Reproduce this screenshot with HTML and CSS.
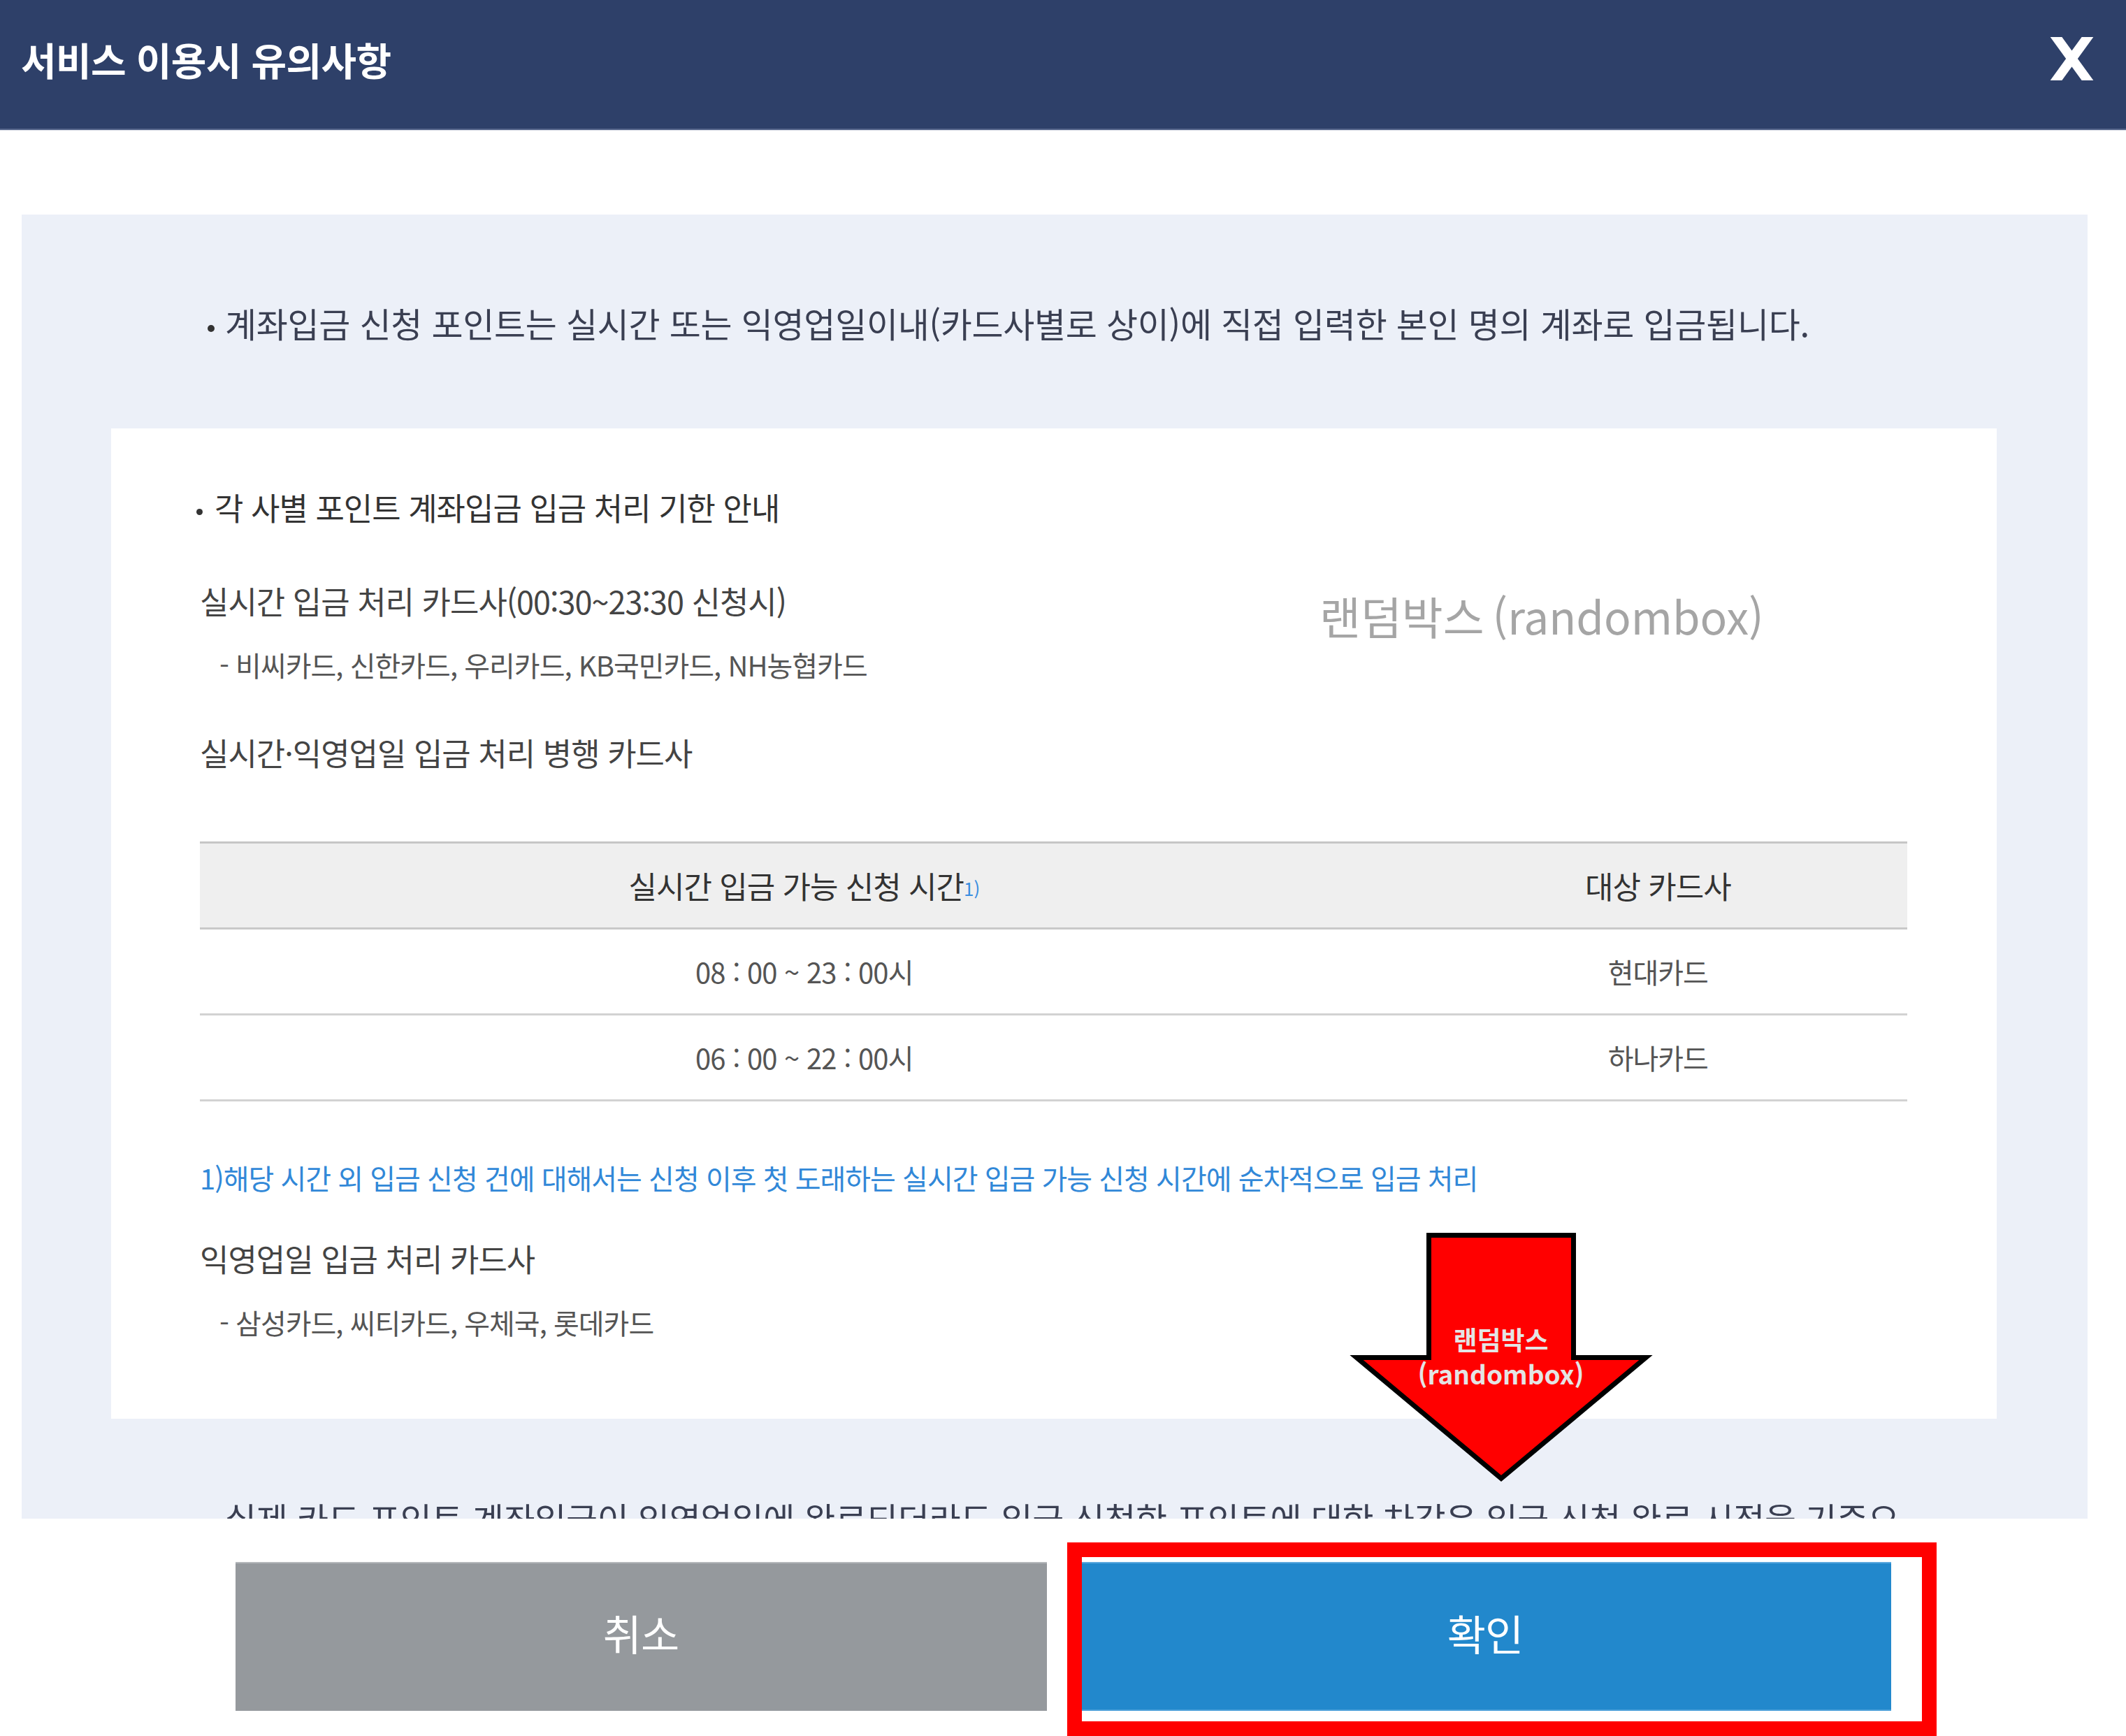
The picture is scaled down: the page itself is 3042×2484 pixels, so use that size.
FILE: index.html
```html
<!DOCTYPE html>
<html lang="ko">
<head>
<meta charset="utf-8">
<title>서비스 이용시 유의사항</title>
<link rel="stylesheet" href="styles.css">
</head>
<body>
<div class="modal">
  <header class="modal-header">
    <h1 class="modal-title">서비스 이용시 유의사항</h1>
    <button class="close" type="button" aria-label="닫기">
      <svg width="63" height="62" viewBox="0 0 63 62"><path d="M3.2 -8 L59.8 70 M59.8 -8 L3.2 70" stroke="#ffffff" stroke-width="13.5" fill="none"/></svg>
    </button>
  </header>

  <main class="modal-body">
    <div class="panel">
      <p class="note">계좌입금 신청 포인트는 실시간 또는 익영업일이내(카드사별로 상이)에 직접 입력한 본인 명의 계좌로 입금됩니다.</p>

      <section class="box">
        <h2 class="box-title">각 사별 포인트 계좌입금 입금 처리 기한 안내</h2>
        <p class="box-sub">실시간 입금 처리 카드사(00:30~23:30 신청시)</p>
        <p class="box-list">- 비씨카드, 신한카드, 우리카드, KB국민카드, NH농협카드</p>
        <p class="box-sub">실시간·익영업일 입금 처리 병행 카드사</p>
        <table class="deadline">
          <thead>
            <tr><th class="col-time">실시간 입금 가능 신청 시간<span class="fn">1)</span></th><th class="col-card">대상 카드사</th></tr>
          </thead>
          <tbody>
            <tr><td class="time">08 : 00 ~ 23 : 00시</td><td>현대카드</td></tr>
            <tr><td class="time">06 : 00 ~ 22 : 00시</td><td>하나카드</td></tr>
          </tbody>
        </table>
        <p class="box-foot">1)해당 시간 외 입금 신청 건에 대해서는 신청 이후 첫 도래하는 실시간 입금 가능 신청 시간에 순차적으로 입금 처리</p>
        <p class="box-sub">익영업일 입금 처리 카드사</p>
        <p class="box-list">- 삼성카드, 씨티카드, 우체국, 롯데카드</p>
        <div class="watermark">랜덤박스<span class="watermark-en">(randombox)</span></div>
      </section>

      <p class="note">실제 카드 포인트 계좌입금이 익영업일에 완료되더라도 입금 신청한 포인트에 대한 차감은 입금 신청 완료 시점을 기준으로 합니다.</p>
    </div>
  </main>

  <footer class="modal-foot">
    <button class="btn btn-cancel" type="button">취소</button>
    <button class="btn btn-ok" type="button">확인</button>
  </footer>

  <div class="callout-frame"></div>
  <div class="callout-arrow">
    <svg width="445" height="370" viewBox="0 0 445 370"><polygon points="119.5,9.5 326.5,9.5 326.5,184.5 430,184.5 223,357.5 16,184.5 119.5,184.5" fill="#ff0000" stroke="#000000" stroke-width="7" stroke-linejoin="miter" stroke-miterlimit="10"/></svg>
    <div class="callout-label">랜덤박스<br>(randombox)</div>
  </div>
</div>
</body>
</html>
```

FILE: styles.css
```css
html, body {
  margin: 0;
  padding: 0;
}

body {
  width: 3042px;
  height: 2484px;
  overflow: hidden;
  background: #ffffff;
  font-family: "Noto Sans CJK KR", "Noto Sans", "Liberation Sans", sans-serif;
  letter-spacing: -1px;
  color: #333333;
}

.modal {
  position: relative;
  width: 3042px;
  height: 2484px;
  display: flex;
  flex-direction: column;
}

/* header */
.modal-header {
  box-sizing: border-box;
  height: 184px;
  flex: 0 0 184px;
  background: #2e4069;
  display: flex;
  align-items: center;
  justify-content: space-between;
  padding: 0 46px 16px 30px;
  box-shadow: 0 2px 1px #55648a;
}

.modal-title {
  margin: 0;
  font-size: 55px;
  line-height: 70px;
  font-weight: 700;
  letter-spacing: -0.6px;
  color: #ffffff;
}

.close {
  border: 0;
  padding: 0;
  background: transparent;
  width: 63px;
  height: 62px;
  display: block;
}

.close svg {
  display: block;
}

/* body */
.modal-body {
  box-sizing: border-box;
  height: 1989px;
  flex: 0 0 1989px;
  overflow: hidden;
  padding: 123px 55px 0 31px;
}

.panel {
  background: #ecf0f8;
  padding: 119px 0 40px 0;
  min-height: 2000px;
}

.note {
  margin: 0;
  padding: 0 262px 0 266px;
  font-size: 49px;
  line-height: 72px;
  letter-spacing: -0.3px;
  color: #3a3f52;
}

.note::before {
  content: "";
  display: inline-block;
  width: 10px;
  height: 10px;
  border-radius: 50%;
  background: #333333;
  vertical-align: middle;
  margin-right: 15px;
}

.box + .note {
  margin-top: 106px;
}

.box {
  position: relative;
  margin: 115px 130px 0 128px;
  background: #ffffff;
  padding: 79px 128px 108px 127px;
}

.box-title {
  margin: 0 0 0 -5px;
  font-size: 45px;
  line-height: 68px;
  font-weight: 400;
  color: #333333;
}

.box-title::before {
  content: "";
  display: inline-block;
  width: 9px;
  height: 9px;
  border-radius: 50%;
  background: #333333;
  vertical-align: middle;
  margin-right: 17px;
}

.box-sub {
  margin: 0;
  font-size: 45px;
  line-height: 68px;
  color: #444444;
}

.box-list {
  margin: 0;
  padding-left: 28px;
  font-size: 40px;
  line-height: 60px;
  color: #555555;
}

.box-foot {
  margin: 0;
  font-size: 40px;
  line-height: 60px;
  color: #3188d8;
}

.box-title + .box-sub { margin-top: 66px; }
.box-sub + .box-list { margin-top: 27px; }
.box-list + .box-sub { margin-top: 62px; }
.box-sub + .deadline { margin-top: 93px; }
.deadline + .box-foot { margin-top: 79px; }
.box-foot + .box-sub { margin-top: 52px; }

/* table */
.deadline {
  width: 100%;
  border-collapse: separate;
  border-spacing: 0;
}

.deadline th,
.deadline td {
  padding: 0;
  height: 120px;
  text-align: center;
  vertical-align: middle;
  border-bottom: 3px solid #d2d2d2;
}

.deadline th {
  background: #efefef;
  border-top: 3px solid #c6c6c6;
  border-bottom-color: #c9c9c9;
  font-size: 44px;
  font-weight: 400;
  color: #333333;
}

.col-time {
  width: 70.8%;
}

.fn {
  font-size: 26px;
  color: #3a8ee0;
  vertical-align: 4px;
  letter-spacing: 0;
}

.deadline td {
  font-size: 40px;
  color: #555555;
}

.deadline td.time {
  font-size: 40px;
  letter-spacing: -0.8px;
}

.watermark {
  position: absolute;
  left: 1729px;
  top: 229px;
  font-size: 64px;
  line-height: 76px;
  letter-spacing: 0;
  color: #a5a5a5;
  white-space: nowrap;
}

.watermark-en {
  margin-left: 12px;
}

/* footer buttons */
.modal-foot {
  flex: 1 1 auto;
  display: flex;
  justify-content: center;
  gap: 47px;
  padding-top: 62px;
}

.btn {
  width: 1161px;
  height: 213px;
  border: 0;
  padding: 0 0 12px 0;
  font-family: inherit;
  font-size: 60px;
  letter-spacing: -1px;
  color: #ffffff;
}

.btn-cancel {
  background: #95999d;
  box-shadow: inset 0 2px 0 #b4b7ba;
}

.btn-ok {
  background: #2288cc;
  box-shadow: inset 0 2px 0 #5aa8de, inset 0 -2px 0 #4a9fd9;
}

/* annotation overlays */
.callout-frame {
  position: absolute;
  left: 1527px;
  top: 2207px;
  width: 1244px;
  height: 277px;
  box-sizing: border-box;
  border: 21px solid #ff0000;
}

.callout-arrow {
  position: absolute;
  left: 1925px;
  top: 1758px;
  width: 445px;
  height: 370px;
}

.callout-arrow svg {
  display: block;
}

.callout-label {
  position: absolute;
  left: 0;
  top: 134px;
  width: 445px;
  text-align: center;
  font-size: 37px;
  line-height: 49px;
  font-weight: 700;
  letter-spacing: 0;
  color: #e4e4e4;
}
```
